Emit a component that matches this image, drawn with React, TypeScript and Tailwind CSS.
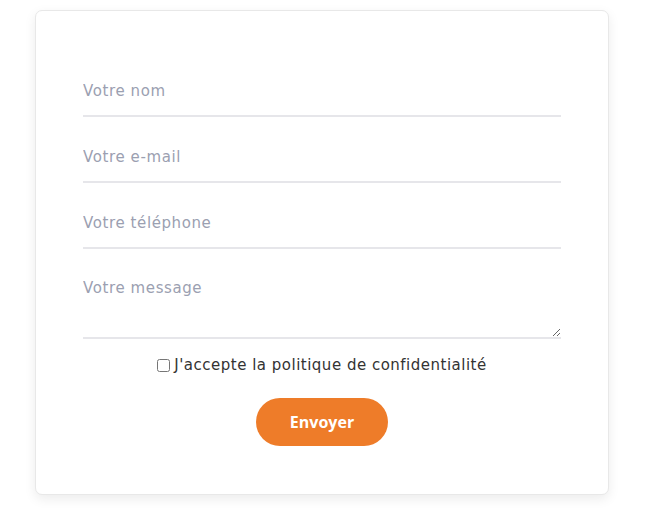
import React from "react";

export default function App() {
  const inputCls =
    "block w-full h-[50px] border-0 border-b-2 border-[#e6e6ea] bg-transparent px-0 text-[15px] tracking-[0.6px] text-[#333] placeholder:text-[#9ba0b1] outline-none";
  return (
    <div className="min-h-[513px] bg-white pt-[10px] pl-[35px]" style={{ fontFamily: '"DejaVu Sans", "Open Sans", sans-serif' }}>
      <div className="w-[574px] rounded-[7px] border border-[#e8e8e8] bg-white px-[47px] pt-[56px] pb-[48px] shadow-[0_4px_12px_rgba(0,0,0,0.08)]">
        <form className="flex flex-col" onSubmit={(e) => e.preventDefault()}>
          <input className={inputCls + " mb-[16px]"} placeholder="Votre nom" />
          <input className={inputCls + " mb-[16px]"} placeholder="Votre e-mail" />
          <input className={inputCls + " mb-[16px]"} placeholder="Votre téléphone" />
          <textarea
            className="block w-full h-[74px] border-0 border-b-2 border-[#e6e6ea] bg-transparent px-0 pt-[12px] text-[15px] leading-[22px] tracking-[0.6px] text-[#333] placeholder:text-[#9ba0b1] outline-none"
            placeholder="Votre message"
          />
          <label className="mt-[16px] flex items-center justify-center text-[15px] leading-[20px] tracking-[0.5px] text-[#333]">
            <input type="checkbox" className="m-0 mr-[4px] h-[13px] w-[13px]" />
            J'accepte la politique de confidentialité
          </label>
          <div className="mt-[23px] flex justify-center">
            <button
              type="submit"
              className="h-[48px] w-[132px] rounded-full bg-[#ee7c29] text-[16px] font-bold text-white"
              style={{ fontFamily: '"Open Sans", sans-serif' }}
            >
              Envoyer
            </button>
          </div>
        </form>
      </div>
    </div>
  );
}
